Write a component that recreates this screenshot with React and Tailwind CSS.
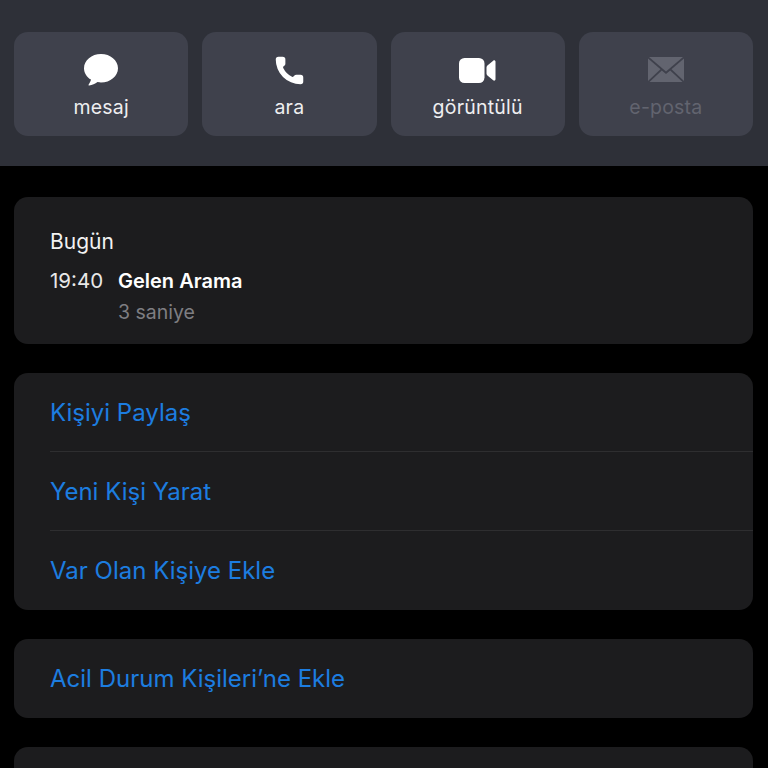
import React from 'react';
import { Phone } from 'lucide-react';

const font = "font-['Inter','Liberation_Sans',sans-serif]";

const MessageIcon = () => (
  <svg width="34" height="32" viewBox="0 0 34 32" fill="currentColor">
    <path d="M17 0C7.600 0 0 6.300 0 14.200c0 4.700 2.800 8.900 7 11.400-.3 1.800-1.300 3.500-2.300 4.800-.4.500-.1 1.100.5 1 2.900-.3 6-1.500 8.300-3.300 1.300.3 2.600.4 3.500.4 9.400 0 17-6.400 17-14.300S26.400 0 17 0z" />
  </svg>
);

const VideoIcon = () => (
  <svg width="37" height="25" viewBox="0 0 37 25" fill="currentColor">
    <rect x="0" y="0" width="25.500" height="25" rx="5.500" />
    <path d="M27.500 9.600c0-.8.300-1.500.9-2l5.800-4.900c1-.8 2.300-.1 2.300 1.100v17.400c0 1.200-1.300 1.900-2.300 1.100l-5.800-4.900c-.6-.5-.9-1.200-.9-2z" />
  </svg>
);

const MailIcon = () => (
  <svg width="36" height="26" viewBox="0 0 36 26" fill="currentColor">
    <path d="M1 0h34L18 14.500z" />
    <path d="M0 1.500v22.500l12.500-11.800z" />
    <path d="M36 1.500v22.500L23.500 12.200z" />
    <path d="M13.800 13.400L18 17l4.200-3.600L34.500 25h-33z" />
  </svg>
);

const ActionButton = ({ icon, label, disabled }) => (
  <div className={`flex-1 h-[104px] rounded-[14px] bg-[#3f414c] flex flex-col items-center ${disabled ? 'text-[#62646f]' : 'text-white'}`}>
    <div className="h-[54px] w-full flex items-center justify-center pt-[22px]">{icon}</div>
    <span className={`mt-[9px] text-[19.500px] leading-[24px] tracking-[0.2px] ${disabled ? 'text-[#62646f]' : 'text-[#eeeef0]'}`}>{label}</span>
  </div>
);

const LinkRow = ({ children, border }) => (
  <div className="pl-9">
    <div className={`h-[79px] flex items-center pt-[1px] text-[24px] text-[#1c7de0] ${border ? 'border-b border-[#2e2e30]' : ''}`}>
      {children}
    </div>
  </div>
);

export default function App() {
  return (
    <div className={`${font} w-[768px] h-[768px] overflow-hidden bg-black`}>
      <div className="h-[166px] bg-[#2e3038] pl-[14px] pr-[15px] pt-8 flex gap-[14px]">
        <ActionButton icon={<MessageIcon />} label="mesaj" />
        <ActionButton icon={<Phone size={33} fill="currentColor" strokeWidth={0} />} label="ara" />
        <ActionButton icon={<VideoIcon />} label="görüntülü" />
        <ActionButton icon={<MailIcon />} label="e-posta" disabled />
      </div>

      <div className="pl-[14px] pr-[15px] pt-[31px] flex flex-col gap-[29px]">
        <div className="h-[147px] rounded-[14px] bg-[#1c1c1e] pl-9 pt-[31px]">
          <div className="text-[21px] leading-[28px] text-[#f2f2f2]">Bugün</div>
          <div className="flex mt-[11px]">
            <span className="w-[68px] text-[20.500px] leading-[28px] text-[#e8e8e8]">19:40</span>
            <div>
              <div className="text-[20px] leading-[28px] font-semibold text-white">Gelen Arama</div>
              <div className="mt-[3px] text-[19.500px] leading-[28px] text-[#7e7e82]">3 saniye</div>
            </div>
          </div>
        </div>

        <div className="rounded-[14px] bg-[#1c1c1e]">
          <LinkRow border>Kişiyi Paylaş</LinkRow>
          <LinkRow border>Yeni Kişi Yarat</LinkRow>
          <LinkRow>Var Olan Kişiye Ekle</LinkRow>
        </div>

        <div className="rounded-[14px] bg-[#1c1c1e]">
          <LinkRow>Acil Durum Kişileri’ne Ekle</LinkRow>
        </div>

        <div className="h-[79px] rounded-[14px] bg-[#1c1c1e]" />
      </div>
    </div>
  );
}
